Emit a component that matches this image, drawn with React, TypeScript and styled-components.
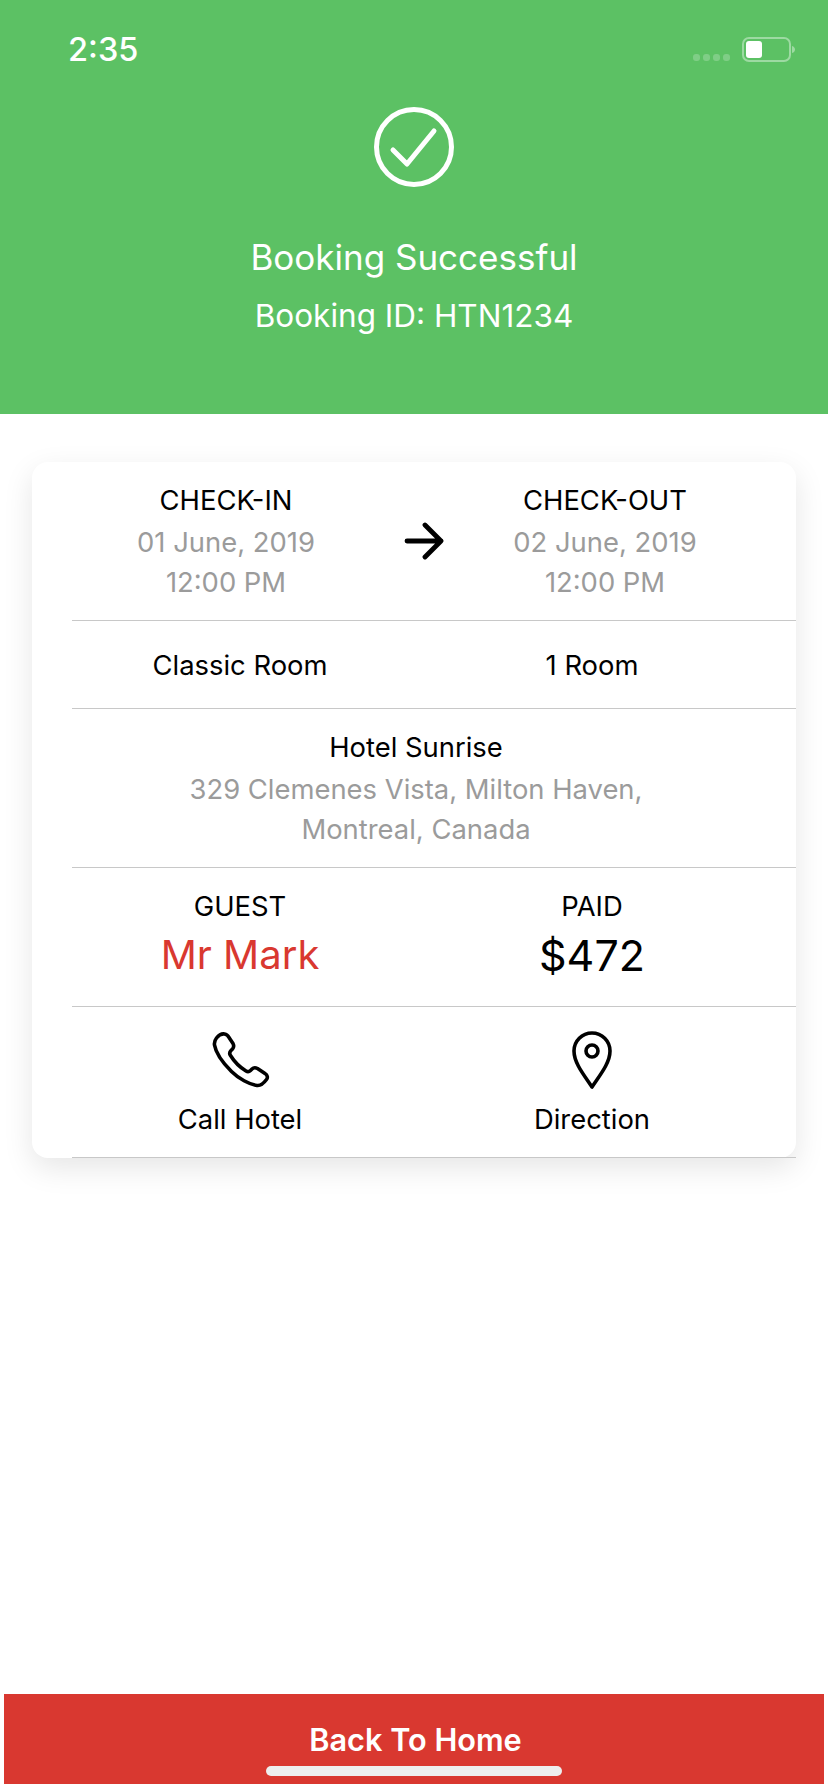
import styled, { createGlobalStyle } from 'styled-components';

const GlobalStyle = createGlobalStyle`
  html, body {
    margin: 0;
    padding: 0;
    background: #fff;
    font-family: Inter, "Liberation Sans", sans-serif;
  }
`;

const Page = styled.div`
  width: 828px;
  height: 1792px;
  display: flex;
  flex-direction: column;
  overflow: hidden;
`;

const Header = styled.header`
  height: 414px;
  flex: none;
  background: #5cc164;
  color: #fff;
  display: flex;
  flex-direction: column;
  align-items: center;
`;

const StatusBar = styled.div`
  align-self: stretch;
  height: 107px;
  display: flex;
  justify-content: space-between;
  align-items: flex-start;
  padding: 32px 32px 0 68px;
  box-sizing: border-box;
`;

const Time = styled.span`
  font-size: 32.500px;
  line-height: 36px;
  font-weight: 500;
`;

const StatusIcons = styled.div`
  display: flex;
  align-items: flex-end;
  gap: 12px;
  padding-top: 5px;
`;

const SignalDots = styled.div`
  display: flex;
  gap: 3px;
  padding-bottom: 1px;
`;

const SignalDot = styled.i`
  width: 7px;
  height: 7px;
  border-radius: 3px;
  background: rgba(255, 255, 255, 0.22);
`;

const SuccessIcon = styled.svg`
  display: block;
`;

const Title = styled.h1`
  margin: 48px 0 0;
  font-size: 35px;
  line-height: 44px;
  font-weight: 400;
`;

const BookingId = styled.p`
  margin: 18px 0 0;
  font-size: 31.500px;
  line-height: 38px;
  font-weight: 400;
`;

const Card = styled.section`
  margin: 48px 32px 0;
  background: #fff;
  border-radius: 16px;
  box-shadow: 0 10px 30px rgba(0, 0, 0, 0.1);
  color: #000;
  text-align: center;
`;

const Row = styled.div<{ $columns?: string; $height: number }>`
  height: ${p => p.$height}px;
  box-sizing: border-box;
  margin-left: 40px;
  border-bottom: 1px solid #c8c8c8;
  display: grid;
  grid-template-columns: ${p => p.$columns ?? '1fr'};
  align-items: center;
`;

const Cell = styled.div<{ $insetRight?: number; $insetLeft?: number; $insetTop?: number; $insetBottom?: number }>`
  display: flex;
  flex-direction: column;
  align-items: center;
  padding: ${p => p.$insetTop ?? 0}px ${p => p.$insetRight ?? 0}px ${p => p.$insetBottom ?? 0}px ${p => p.$insetLeft ?? 0}px;
`;

const Label = styled.div`
  font-size: 27.400px;
  line-height: 38px;
`;

const Muted = styled.div`
  font-size: 27.400px;
  line-height: 40px;
  color: #9b9b9b;

  ${Label} + & {
    margin-top: 3px;
  }
`;

const Amount = styled.div<{ $accent?: boolean }>`
  margin-top: 6px;
  font-size: ${p => (p.$accent ? 40 : 43)}px;
  line-height: 48px;
  color: ${p => (p.$accent ? '#d93830' : '#000')};
`;

const ActionIcon = styled.svg`
  width: 60px;
  height: 60px;
  margin-bottom: 10px;
  display: block;
`;

const Footer = styled.footer`
  margin-top: auto;
  padding: 0 4px 8px;
`;

const BackButton = styled.button`
  position: relative;
  width: 100%;
  height: 90px;
  border: 0;
  padding: 2px 0 0 3px;
  background: #d93830;
  color: #fff;
  font: 600 30.700px/40px Inter, "Liberation Sans", sans-serif;
`;

const HomeIndicator = styled.span`
  position: absolute;
  left: 262px;
  bottom: 8px;
  width: 296px;
  height: 10px;
  border-radius: 5px;
  background: #eee;
`;

export default function App() {
  return (
    <Page>
      <GlobalStyle />
      <Header>
        <StatusBar>
          <Time>2:35</Time>
          <StatusIcons>
            <SignalDots>
              <SignalDot />
              <SignalDot />
              <SignalDot />
              <SignalDot />
            </SignalDots>
            <svg width="54" height="25" viewBox="0 0 54 25">
              <rect x="1" y="1" width="47" height="23" rx="6" fill="none" stroke="#fff" strokeOpacity="0.4" strokeWidth="2" />
              <rect x="4" y="4" width="16" height="17" rx="3" fill="#fff" />
              <path d="M50 9c2 .5 3 2 3 3.500s-1 3-3 3.500z" fill="#fff" fillOpacity="0.4" />
            </svg>
          </StatusIcons>
        </StatusBar>
        <SuccessIcon width="80" height="80" viewBox="0 0 80 80" fill="none" stroke="#fff" strokeWidth="5" strokeLinecap="round" strokeLinejoin="round">
          <circle cx="40" cy="40" r="37.500" />
          <path d="M19 43l14 14 27-33" />
        </SuccessIcon>
        <Title>Booking Successful</Title>
        <BookingId>Booking ID: HTN1234</BookingId>
      </Header>

      <Card>
        <Row $height={159} $columns="308px 86px 278px">
          <Cell>
            <Label>CHECK-IN</Label>
            <Muted>01 June, 2019</Muted>
            <Muted>12:00 PM</Muted>
          </Cell>
          <Cell $insetLeft={2}>
            <svg width="40" height="38" viewBox="0 0 40 38" fill="none" stroke="#000" strokeWidth="4.800" strokeLinecap="round" strokeLinejoin="round">
              <path d="M3 19h34M21 3l16 16-16 16" />
            </svg>
          </Cell>
          <Cell>
            <Label>CHECK-OUT</Label>
            <Muted>02 June, 2019</Muted>
            <Muted>12:00 PM</Muted>
          </Cell>
        </Row>
        <Row $height={88} $columns="336px 368px">
          <Label>Classic Room</Label>
          <Label>1 Room</Label>
        </Row>
        <Row $height={159}>
          <Cell $insetRight={36}>
            <Label>Hotel Sunrise</Label>
            <Muted>329 Clemenes Vista, Milton Haven,</Muted>
            <Muted>Montreal, Canada</Muted>
          </Cell>
        </Row>
        <Row $height={139} $columns="336px 368px">
          <Cell $insetBottom={8}>
            <Label>GUEST</Label>
            <Amount $accent>Mr Mark</Amount>
          </Cell>
          <Cell $insetBottom={8}>
            <Label>PAID</Label>
            <Amount>$472</Amount>
          </Cell>
        </Row>
        <Row $height={151} $columns="336px 368px">
          <Cell $insetTop={4}>
            <ActionIcon viewBox="-1.500 0 60 60" fill="none" stroke="#000" strokeWidth="3.600" strokeLinecap="round" strokeLinejoin="round">
              <path d="M5 8C7 5.500 10 3.500 13 4C15 4.300 16.500 5.500 17.500 7.500L21.500 13.500C22.500 15.500 22.300 17.500 21 19L19.500 20.500C18 22 18 24 19 25.500C23 32 28 37 34.500 41C36 42 38 41.500 39 40.500L40.500 39C42 37.500 44 37.500 46 38.500L53.500 43.500C56 45 56.500 47.500 55 49.500C52 53.500 49 56 45.500 55.500C38 54.500 27 48.500 20 41.500C12 33.500 4.500 24 3 15C2.500 12 3.500 10 5 8Z" />
            </ActionIcon>
            <Label>Call Hotel</Label>
          </Cell>
          <Cell $insetTop={4}>
            <ActionIcon viewBox="0 0 60 60" fill="none" stroke="#000" strokeWidth="3.600" strokeLinecap="round" strokeLinejoin="round">
              <path d="M30 57C22 45 12 33 12 21a18 18 0 0 1 36 0c0 12-10 24-18 36z" />
              <circle cx="30" cy="21" r="6" />
            </ActionIcon>
            <Label>Direction</Label>
          </Cell>
        </Row>
      </Card>

      <Footer>
        <BackButton>
          Back To Home
          <HomeIndicator />
        </BackButton>
      </Footer>
    </Page>
  );
}
